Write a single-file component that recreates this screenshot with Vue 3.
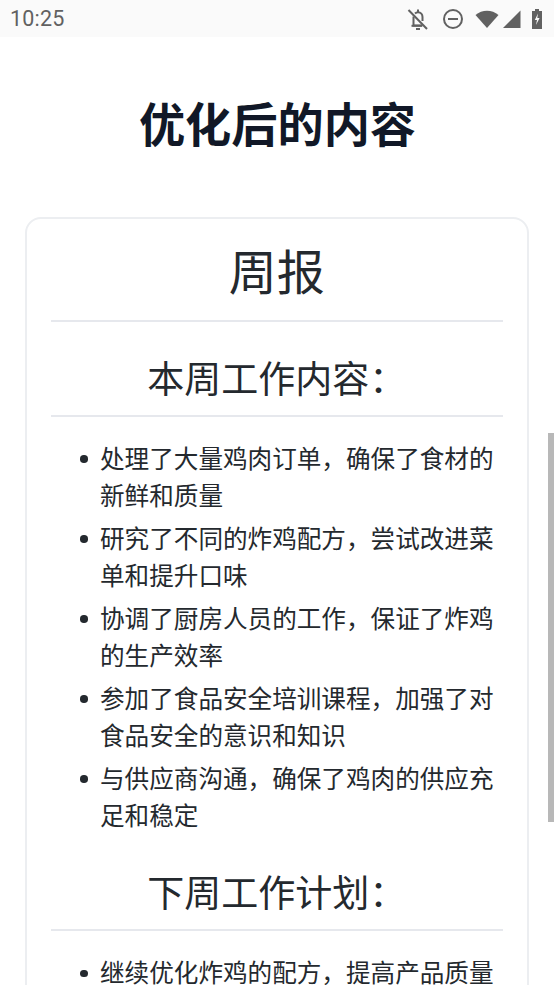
<script setup>
const thisWeek = [
  '处理了大量鸡肉订单，确保了食材的新鲜和质量',
  '研究了不同的炸鸡配方，尝试改进菜单和提升口味',
  '协调了厨房人员的工作，保证了炸鸡的生产效率',
  '参加了食品安全培训课程，加强了对食品安全的意识和知识',
  '与供应商沟通，确保了鸡肉的供应充足和稳定',
]
const nextWeek = ['继续优化炸鸡的配方，提高产品质量']
</script>

<template>
  <div class="screen">
    <header class="status">
      <span class="time">10:25</span>
      <div class="icons">
        <svg class="ic" width="24" height="24" viewBox="0 0 24 24" fill="none" stroke="#616161" stroke-width="2">
          <path d="M7.5 9.5V18.5H16.5" />
          <path d="M9 6.5C10 5.5 11 5.2 12 5.2C14.8 5.2 16.5 7.4 16.5 10V14" />
          <path d="M5.5 18.8H16" />
          <path d="M10 22H14" />
          <path d="M12 2.5V5" />
          <path d="M2.5 3L21 22" />
        </svg>
        <svg class="ic dnd" width="22" height="22" viewBox="0 0 22 22" fill="none" stroke="#616161" stroke-width="2">
          <circle cx="11" cy="11" r="9" />
          <path d="M6 11H16" />
        </svg>
        <svg class="ic wifi" width="24" height="18" viewBox="0 0 24 18">
          <path d="M0.5 5C7 -0.8 17 -0.8 23.5 5L12 18Z" fill="#616161" />
        </svg>
        <svg class="ic signal" width="18" height="18" viewBox="0 0 18 18">
          <path d="M17.5 0.5V18H0Z" fill="#616161" />
        </svg>
        <svg class="ic batt" width="12" height="20" viewBox="0 0 12 20">
          <path d="M4 0H8V2H11V20H1V2H4Z" fill="#616161" />
          <path d="M7 4.5L3.8 11H6L5 16L8.6 9H6.3Z" fill="#fafafa" />
        </svg>
      </div>
    </header>

    <main class="content">
      <h1 class="title">优化后的内容</h1>
      <section class="card">
        <h2 class="report">周报</h2>
        <h3 class="section">本周工作内容：</h3>
        <ul class="items">
          <li v-for="item in thisWeek" :key="item">{{ item }}</li>
        </ul>
        <h3 class="section">下周工作计划：</h3>
        <ul class="items">
          <li v-for="item in nextWeek" :key="item">{{ item }}</li>
        </ul>
      </section>
    </main>

    <div class="scrollbar"></div>
  </div>
</template>

<style scoped>
.screen {
  position: relative;
  width: 554px;
  height: 985px;
  overflow: hidden;
  background: #fff;
  font-family: "Noto Sans CJK SC", "Noto Sans", sans-serif;
}
.status {
  height: 37px;
  background: #fafafa;
  display: flex;
  align-items: center;
  justify-content: space-between;
  padding: 0 11px 0 10px;
  box-sizing: border-box;
}
.time {
  font-family: Roboto, sans-serif;
  font-size: 21.5px;
  color: #616161;
  letter-spacing: 0.2px;
}
.icons {
  display: flex;
  align-items: center;
}
.ic {
  display: block;
  flex: none;
}
.dnd {
  margin-left: 12px;
}
.wifi {
  margin-left: 11px;
}
.signal {
  margin-left: 4px;
}
.batt {
  margin-left: 10px;
}
.content {
  padding: 54px 25px 0;
}
.title {
  margin: 0 0 65px;
  padding: 1px 0 0 1px;
  text-align: center;
  font-size: 46.2px;
  line-height: 60px;
  font-weight: 700;
  color: #111827;
}
.card {
  border: 2px solid #eceef1;
  border-radius: 16px;
  padding: 14.5px 24px 24px 23.5px;
}
.report {
  margin: 0;
  padding-bottom: 16px;
  text-align: center;
  font-size: 48px;
  line-height: 70px;
  font-weight: 400;
  color: #24292e;
  border-bottom: 2px solid #e6e8ed;
}
.section {
  margin: 25px 0 0;
  padding-bottom: 8px;
  text-align: center;
  font-size: 37px;
  line-height: 60px;
  font-weight: 400;
  color: #24292e;
  border-bottom: 2px solid #e6e8ed;
}
.items {
  margin: 22px 0 28.5px;
  padding: 0 0 0 49.5px;
  list-style: none;
  font-size: 24.6px;
  line-height: 37px;
  color: #24292e;
}
.items li {
  position: relative;
  margin-bottom: 6px;
}
.items li::before {
  content: "";
  position: absolute;
  left: -20px;
  top: 16.5px;
  width: 7.5px;
  height: 7.5px;
  border-radius: 50%;
  background: #24292e;
}
.scrollbar {
  position: absolute;
  right: 0;
  top: 433px;
  width: 6px;
  height: 389px;
  background: #b8b8b8;
}
</style>
